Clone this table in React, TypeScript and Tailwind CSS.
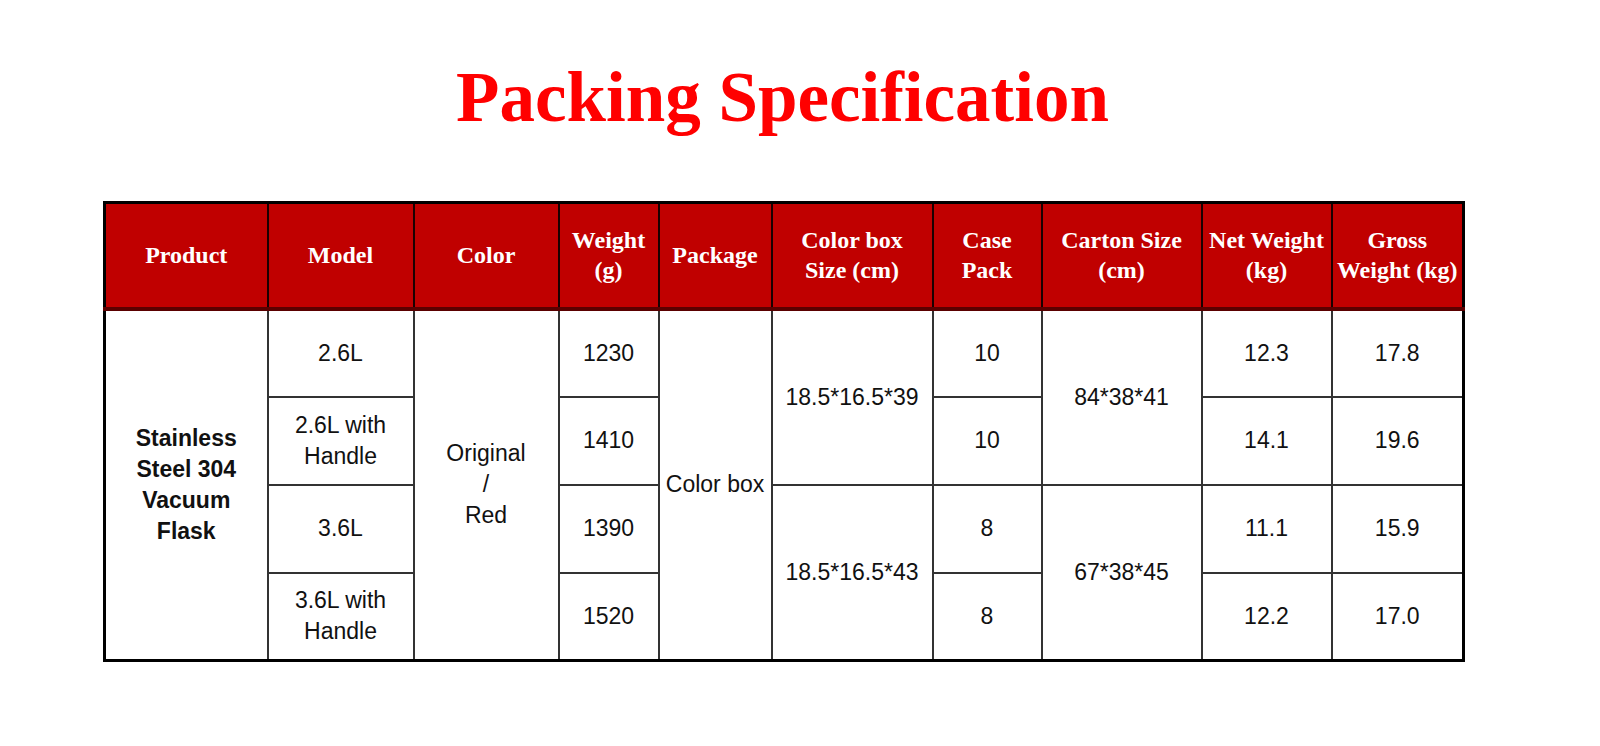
import React from 'react';

const serif = { fontFamily: '"Liberation Serif", "Times New Roman", serif' };

const headers = [
  ['Product'],
  ['Model'],
  ['Color'],
  ['Weight', '(g)'],
  ['Package'],
  ['Color box', 'Size (cm)'],
  ['Case', 'Pack'],
  ['Carton Size', '(cm)'],
  ['Net Weight', '(kg)'],
  ['Gross', 'Weight (kg)'],
];

const widths = [163, 146, 145, 100, 113, 161, 109, 160, 130, 132];

const rows = [
  { model: ['2.6L'], weight: '1230', pack: '10', net: '12.3', gross: '17.8' },
  { model: ['2.6L with', 'Handle'], weight: '1410', pack: '10', net: '14.1', gross: '19.6' },
  { model: ['3.6L'], weight: '1390', pack: '8', net: '11.1', gross: '15.9' },
  { model: ['3.6L with', 'Handle'], weight: '1520', pack: '8', net: '12.2', gross: '17.0' },
];

const cell = 'border-2 border-[#333] text-center align-middle p-0 text-[23px] leading-[31px] text-[#111]';

function Lines({ items }: { items: string[] }) {
  return (
    <>
      {items.map((t, i) => (
        <div key={i}>{t}</div>
      ))}
    </>
  );
}

export default function App() {
  return (
    <div className="min-h-screen w-full bg-white">
      <div className="w-[1359px] ml-[103px]">
        <h1
          className="pt-[62px] text-center text-[71px] leading-none font-bold text-[#ff0000]"
          style={serif}
        >
          Packing Specification
        </h1>

        <table
          className="mt-[68px] w-[1359px] table-fixed border-collapse border-[3px] border-black"
          style={{ fontFamily: '"Liberation Sans", Arial, sans-serif' }}
        >
          <colgroup>
            {widths.map((w, i) => (
              <col key={i} style={{ width: w }} />
            ))}
          </colgroup>
          <thead>
            <tr className="h-[106px] bg-[#c00000]">
              {headers.map((h, i) => (
                <th
                  key={i}
                  className="border-2 border-[#1a0000] border-b-[4px] border-b-[#5a0000] text-center align-middle p-0 text-white font-bold text-[24px] leading-[30px] whitespace-nowrap"
                  style={serif}
                >
                  <Lines items={h} />
                </th>
              ))}
            </tr>
          </thead>
          <tbody>
            {rows.map((r, i) => (
              <tr key={i} className="h-[88px]">
                {i === 0 && (
                  <td rowSpan={4} className={`${cell} font-bold`}>
                    <Lines items={['Stainless', 'Steel 304', 'Vacuum', 'Flask']} />
                  </td>
                )}
                <td className={cell}>
                  <Lines items={r.model} />
                </td>
                {i === 0 && (
                  <td rowSpan={4} className={cell}>
                    <Lines items={['Original', '/', 'Red']} />
                  </td>
                )}
                <td className={cell}>{r.weight}</td>
                {i === 0 && (
                  <td rowSpan={4} className={`${cell} whitespace-nowrap`}>
                    Color box
                  </td>
                )}
                {i % 2 === 0 && (
                  <td rowSpan={2} className={cell}>
                    {i === 0 ? '18.5*16.5*39' : '18.5*16.5*43'}
                  </td>
                )}
                <td className={cell}>{r.pack}</td>
                {i % 2 === 0 && (
                  <td rowSpan={2} className={cell}>
                    {i === 0 ? '84*38*41' : '67*38*45'}
                  </td>
                )}
                <td className={cell}>{r.net}</td>
                <td className={cell}>{r.gross}</td>
              </tr>
            ))}
          </tbody>
        </table>
      </div>
    </div>
  );
}
